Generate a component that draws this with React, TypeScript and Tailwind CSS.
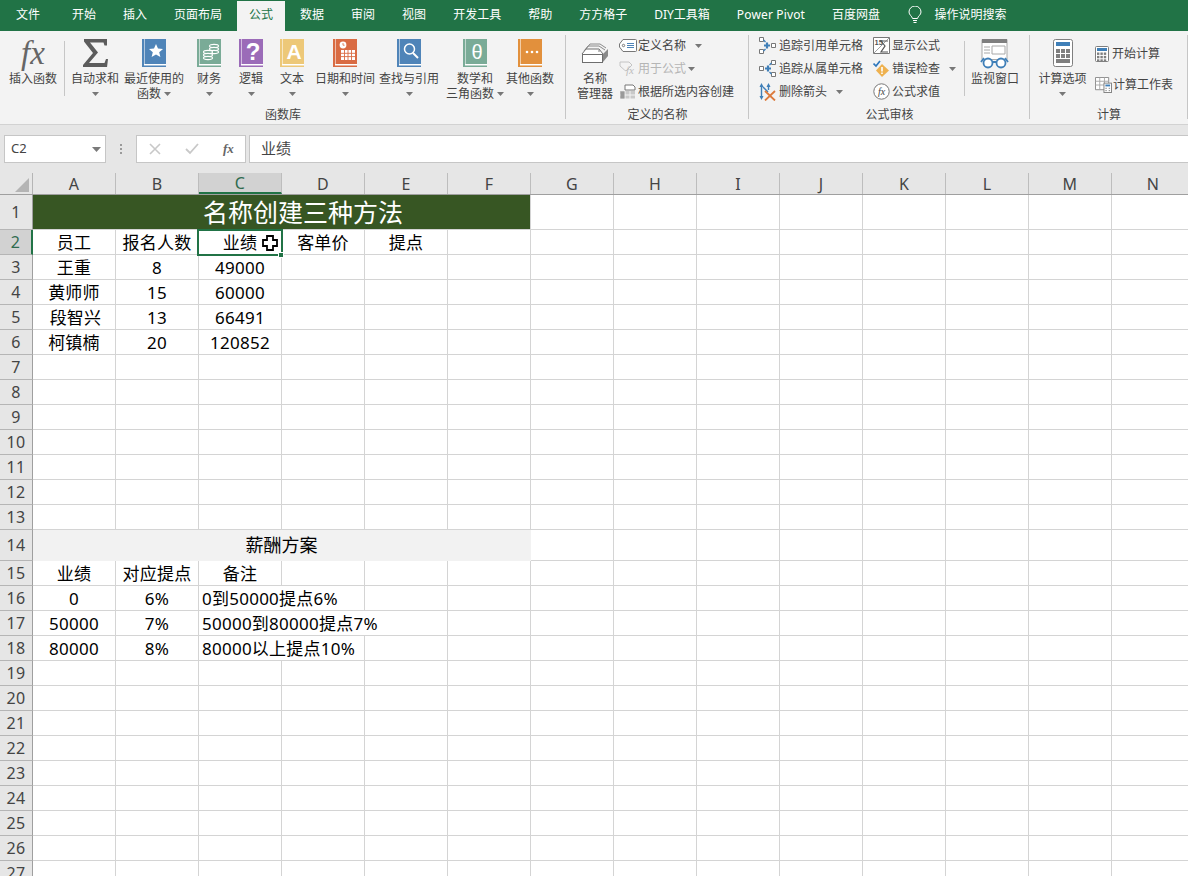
import React from 'react';

const tabs = ['开始', '插入', '页面布局', '公式', '数据', '审阅', '视图', '开发工具', '帮助', '方方格子', 'DIY工具箱', 'Power Pivot', '百度网盘'];
const cols = ['A', 'B', 'C', 'D', 'E', 'F', 'G', 'H', 'I', 'J', 'K', 'L', 'M', 'N'];

type Cell = { text?: string; span?: string; cls?: string; left?: boolean };
type Row = { n: number; h: string; cells: Cell[] };

const plain = (n: number): Row => ({ n, h: 'h-[25px]', cells: [] });
const row = (n: number, ...texts: string[]): Row => ({ n, h: 'h-[25px]', cells: texts.map((text) => ({ text })) });

const rows: Row[] = [
    { n: 1, h: 'h-[35px]', cells: [{ text: '名称创建三种方法', span: 'col-span-6', cls: 'bg-[#375623] text-white text-[25px] tracking-normal pl-[43px] border-[#375623]' }] },
    row(2, '员工', '报名人数', '业绩', '客单价', '提点'),
    row(3, '王重', '8', '49000'),
    row(4, '黄师师', '15', '60000'),
    { n: 5, h: 'h-[25px]', cells: [{ text: '段智兴', cls: 'pl-[3px]' }, { text: '13' }, { text: '66491' }] },
    row(6, '柯镇楠', '20', '120852'),
    plain(7), plain(8), plain(9), plain(10), plain(11), plain(12), plain(13),
    { n: 14, h: 'h-[31px]', cells: [{ text: '薪酬方案', span: 'col-span-6', cls: 'bg-[#f2f2f2] text-[18px] tracking-normal border-[#f2f2f2]' }] },
    row(15, '业绩', '对应提点', '备注'),
    { n: 16, h: 'h-[25px]', cells: [{ text: '0' }, { text: '6%' }, { text: '0到50000提点6%', span: 'col-span-2', left: true }] },
    { n: 17, h: 'h-[25px]', cells: [{ text: '50000' }, { text: '7%' }, { text: '50000到80000提点7%', span: 'col-span-3', left: true }] },
    { n: 18, h: 'h-[25px]', cells: [{ text: '80000' }, { text: '8%' }, { text: '80000以上提点10%', span: 'col-span-2', left: true }] },
    plain(19), plain(20), plain(21), plain(22), plain(23), plain(24), plain(25), plain(26), plain(27),
];

const Caret = () => (
    <svg width="7" height="4" viewBox="0 0 7 4" className="inline-block shrink-0">
        <path d="M0 0h7L3.5 4z" fill="#777" />
    </svg>
);

const Book = ({ color, children }: { color: string; children?: React.ReactNode }) => (
    <svg width="24" height="28" viewBox="0 0 24 28">
        <rect x="0" y="0" width="24" height="25" fill={color} />
        <rect x="2" y="25" width="22" height="1.500" fill="#fff" />
        <rect x="0" y="26.500" width="24" height="1.500" fill={color} />
        <rect x="0" y="0" width="2" height="28" fill={color} />
        <rect x="2" y="0" width="1" height="25" fill="#fff" opacity="0.55" />
        {children}
    </svg>
);

const bookIcons: Record<string, React.ReactNode> = {
    recent: <Book color="#4f84b8"><path d="M14 5l2 4.6 5 .4-3.8 3.2 1.2 4.8-4.4-2.6-4.4 2.6 1.2-4.8L7 10l5-.4z" fill="#fff" /></Book>,
    finance: (
        <Book color="#7aab97">
            <g fill="#7aab97" stroke="#fff" strokeWidth="1.1">
                <ellipse cx="17" cy="7" rx="4.5" ry="1.6" />
                <ellipse cx="17" cy="10" rx="4.5" ry="1.6" />
                <ellipse cx="17" cy="13" rx="4.5" ry="1.6" />
                <ellipse cx="11" cy="13" rx="4.5" ry="1.6" />
                <ellipse cx="11" cy="16" rx="4.5" ry="1.6" />
                <ellipse cx="11" cy="19" rx="4.5" ry="1.6" />
            </g>
        </Book>
    ),
    logic: <Book color="#9b6bb8"><text x="14" y="20.500" textAnchor="middle" fontSize="24" fontWeight="700" fill="#fff" fontFamily="Liberation Sans">?</text></Book>,
    text: <Book color="#edc878"><text x="14" y="19.500" textAnchor="middle" fontSize="21" fontWeight="700" fill="#fff" fontFamily="Liberation Sans">A</text></Book>,
    date: (
        <Book color="#d96b43">
            <circle cx="10" cy="6" r="3.4" fill="#fff" />
            <path d="M10 4v2.2h1.6" stroke="#d96b43" strokeWidth="0.8" fill="none" />
            <path d="M8 11h14v10H8z" fill="#fff" />
            <path d="M8 14.3h14M8 17.6h14M11.5 11v10M15 11v10M18.5 11v10" stroke="#d96b43" strokeWidth="0.9" />
        </Book>
    ),
    lookup: (
        <Book color="#4f84b8">
            <circle cx="12.500" cy="10" r="5" fill="none" stroke="#fff" strokeWidth="1.500" />
            <path d="M16 14l5 5" stroke="#fff" strokeWidth="2" />
        </Book>
    ),
    math: <Book color="#7aab97"><text x="14" y="19.500" textAnchor="middle" fontSize="20" fill="#fff" fontFamily="Liberation Sans">θ</text></Book>,
    other: <Book color="#e2903c"><circle cx="9" cy="13" r="1.3" fill="#fff" /><circle cx="14" cy="13" r="1.3" fill="#fff" /><circle cx="19" cy="13" r="1.3" fill="#fff" /></Book>,
};

const Sigma = () => (
    <svg width="25" height="28" viewBox="0 0 25 28">
        <path d="M1 0h23v6.500h-2.500l-1-3H7l8 10-9 10.500h15.500l1.500-4H25l-1 8.500H0v-2.500L10 14 1 2.500z" fill="#5c5c5c" />
    </svg>
);

const NameManagerIcon = () => (
    <svg width="28" height="23" viewBox="0 0 28 23" fill="none">
        <path d="M5 7l4-5h10l6 4M3 9l4-5h11l6 4" stroke="#8a8a8a" strokeWidth="1" />
        <path d="M1 12l4-5h13l4 5" fill="#fff" stroke="#6e6e6e" strokeWidth="1" />
        <path d="M22 12l5-5v7l-5 6z" fill="#8a8a8a" />
        <rect x="1.500" y="12.500" width="20" height="8" fill="#fff" stroke="#6e6e6e" />
        <circle cx="18" cy="9" r="0.8" fill="#6e6e6e" />
    </svg>
);

const TagIcon = () => (
    <svg width="18" height="13" viewBox="0 0 18 13" fill="none">
        <path d="M4 .5h12.500a1 1 0 0 1 1 1v10a1 1 0 0 1-1 1H4L.5 8V5z" fill="#fff" stroke="#777" />
        <circle cx="4.500" cy="6.500" r="1.200" stroke="#777" />
        <path d="M8 4.500h7M8 6.500h7M8 8.500h7" stroke="#4f84b8" />
    </svg>
);

const UseFormulaIcon = () => (
    <svg width="18" height="18" viewBox="0 0 18 18" fill="none">
        <path d="M1 2h9l3 3-6 6-1.500-1L1 6z" stroke="#c4c4c4" />
        <text x="7" y="14" fontSize="11" fontStyle="italic" fontFamily="Liberation Serif" fill="#bdbdbd">fx</text>
    </svg>
);

const FromSelectionIcon = () => (
    <svg width="17" height="15" viewBox="0 0 17 15" fill="none">
        <path d="M1 7h15v7.500H1z" fill="#c9c9c9" />
        <path d="M1 11h15M6 7v8M11 7v8" stroke="#f3f3f3" />
        <path d="M6 1h8l2 2v3H6z" fill="#fff" stroke="#777" />
        <path d="M1.500 7.500h4v7h-4z" fill="#9a9a9a" />
    </svg>
);

const TraceIcon = ({ flip }: { flip?: boolean }) => (
    <svg width="17" height="17" viewBox="0 0 17 17" fill="none" className={flip ? '-scale-x-100' : ''}>
        <path d="M.5.500h4v4h-4zM.5 12.500h4v4h-4zM12.500 6.500h4v4h-4z" stroke="#777" fill="#fff" />
        <path d="M5 8.500h6M8 5.500v6" stroke="#3f7fb8" strokeWidth="2.200" />
        <path d="M4.500 3l2 2M4.500 14l2-2" stroke="#3f7fb8" strokeWidth="1.400" />
    </svg>
);

const RemoveArrowsIcon = () => (
    <svg width="17" height="18" viewBox="0 0 17 18" fill="none">
        <path d="M2.500 2v13M9.500 2v5" stroke="#3f7fb8" strokeWidth="1.400" />
        <path d="M.5 13l2 4 2-4zM.5 4l2-4 2 4zM7.500 4l2-4 2 4z" fill="#3f7fb8" />
        <path d="M4 4l5 5" stroke="#3f7fb8" strokeWidth="1.400" />
        <path d="M6 8l10 9.500M16 8L6 17.500" stroke="#dc7a3c" strokeWidth="1.800" />
    </svg>
);

const ShowFormulaIcon = () => (
    <svg width="17" height="17" viewBox="0 0 17 17" fill="none">
        <path d="M.5.500h16v16H.5z" stroke="#777" fill="#fff" />
        <text x="1.500" y="8" fontSize="7.500" fontWeight="700" fontFamily="Liberation Sans" fill="#555">15</text>
        <path d="M7 4h8M8 4l4 5-4 6h7" stroke="#555" strokeWidth="1.200" />
        <path d="M1 16L16 1" stroke="#777" strokeWidth="0.700" />
    </svg>
);

const ErrorCheckIcon = () => (
    <svg width="17" height="17" viewBox="0 0 17 17" fill="none">
        <path d="M9 4l7 6.500-7 6.500-6-6.500z" fill="#eeb14f" />
        <path d="M9 7v4.500M9 12.500v1.500" stroke="#fff" strokeWidth="1.600" />
        <path d="M.5 3.500L3 6l4-5" stroke="#2f78bd" strokeWidth="1.700" />
    </svg>
);

const EvaluateIcon = () => (
    <svg width="17" height="17" viewBox="0 0 17 17" fill="none">
        <circle cx="8.500" cy="8.500" r="7.700" fill="#fff" stroke="#777" />
        <text x="8.500" y="12" textAnchor="middle" fontSize="10" fontStyle="italic" fontFamily="Liberation Serif" fill="#444">fx</text>
    </svg>
);

const WatchIcon = () => (
    <svg width="30" height="30" viewBox="0 0 30 30" fill="none">
        <path d="M2 .500h25v20H2z" fill="#fff" stroke="#a8a8a8" />
        <path d="M2 0h25v4H2z" fill="#7f7f7f" />
        <path d="M4 8h6M4 11h6M4 14h6" stroke="#a8a8a8" />
        <path d="M12 7h13v8H12z" stroke="#a8a8a8" />
        <circle cx="8" cy="24" r="4.500" fill="#fff" stroke="#3f7fb8" strokeWidth="1.800" />
        <circle cx="21" cy="24" r="4.500" fill="#fff" stroke="#3f7fb8" strokeWidth="1.800" />
        <path d="M12 23h5M1 23l3-4M28 23l-3-4" stroke="#3f7fb8" strokeWidth="1.800" />
    </svg>
);

const CalcKeys = ({ x, y, cell, gap, n }: { x: number; y: number; cell: number; gap: number; n: number }) => (
    <g fill="#7f7f7f">
        {Array.from({ length: n * n }).map((_, i) => (
            <rect key={i} x={x + (i % n) * (cell + gap)} y={y + Math.floor(i / n) * (cell + gap)} width={cell} height={cell} />
        ))}
    </g>
);

const CalcIcon = () => (
    <svg width="20" height="28" viewBox="0 0 20 28" fill="none">
        <rect x="0.500" y="0.500" width="19" height="27" rx="2" fill="#fff" stroke="#7f7f7f" />
        <rect x="3" y="3" width="14" height="4" fill="#3f7fb8" />
        <CalcKeys x={3} y={10} cell={4} gap={1} n={3} />
        <rect x="3" y="20" width="14" height="4" fill="#7f7f7f" />
    </svg>
);

const SmallCalcIcon = () => (
    <svg width="14" height="16" viewBox="0 0 14 16" fill="none">
        <rect x="0.500" y="0.500" width="13" height="15" rx="1" fill="#fff" stroke="#7f7f7f" />
        <rect x="2" y="2" width="10" height="3" fill="#3f7fb8" />
        <CalcKeys x={2} y={6.5} cell={2.4} gap={1} n={3} />
    </svg>
);

const CalcSheetIcon = () => (
    <svg width="17" height="16" viewBox="0 0 18 17" fill="none">
        <path d="M.5.500h14v13H.5z" fill="#fff" stroke="#8a8a8a" />
        <path d="M.5 4.500h14M.5 8.500h14M5 .5v13M10 .5v13" stroke="#a8a8a8" />
        <rect x="9.500" y="6.500" width="8" height="10" fill="#fff" stroke="#7f7f7f" />
        <rect x="11" y="8" width="5" height="2" fill="#3f7fb8" />
        <path d="M11 12h1.500M14.500 12H16M11 14.500h1.500M14.500 14.500H16" stroke="#7f7f7f" />
    </svg>
);

const BigButton = ({ width, icon, lines, caret }: { width: string; icon: React.ReactNode; lines: string[]; caret?: 'inline' | 'below' }) => (
    <div className={`${width} shrink-0 flex flex-col items-center pt-[8px]`}>
        <div className="h-[32px] flex items-start justify-center">{icon}</div>
        {lines.map((line, i) => (
            <div key={line} className="h-[15px] leading-[15px] whitespace-nowrap flex items-center gap-[3px]">
                {line}
                {caret === 'inline' && i === lines.length - 1 && <Caret />}
            </div>
        ))}
        {caret === 'below' && <div className="h-[15px] flex items-center"><Caret /></div>}
    </div>
);

const SmallRow = ({ icon, text, h, iconW, caretGap, disabled }: { icon: React.ReactNode; text: string; h: string; iconW: string; caretGap?: string; disabled?: boolean }) => (
    <div className={`${h} flex items-center whitespace-nowrap ${disabled ? 'text-[#b5b5b5]' : ''}`}>
        <div className={`${iconW} shrink-0 flex items-center`}>{icon}</div>
        {text}
        {caretGap && <div className={`${caretGap} flex`}><Caret /></div>}
    </div>
);

const Group = ({ width, label, children }: { width: string; label: string; children: React.ReactNode }) => (
    <div className={`${width} shrink-0 h-full flex flex-col relative`}>
        <div className="flex h-[74px]">{children}</div>
        <div className="text-center leading-[15px] pt-[2px]">{label}</div>
        <div className="absolute right-0 top-[4px] h-[84px] w-px bg-[#c6c6c6]" />
    </div>
);

const InnerSep = () => <div className="w-px h-[55px] mt-[10px] bg-[#c6c6c6] shrink-0" />;

const Ribbon = () => (
    <div className="h-[94px] bg-[#f3f3f3] border-b border-[#d2d2d2] flex text-[12px] text-[#444]">
        <Group width="w-[566px]" label="函数库">
            <div className="w-[64px] shrink-0 flex flex-col items-center pt-[4px] pl-[2px]">
                <div className="h-[36px] leading-[36px] text-[33px] italic text-[#666] [font-family:'Liberation_Serif',serif]">fx</div>
                <div className="h-[15px] leading-[15px] whitespace-nowrap">插入函数</div>
            </div>
            <InnerSep />
            <BigButton width="w-[60px]" icon={<Sigma />} lines={['自动求和']} caret="below" />
            <BigButton width="w-[58px]" icon={bookIcons.recent} lines={['最近使用的', '函数']} caret="inline" />
            <BigButton width="w-[52px]" icon={bookIcons.finance} lines={['财务']} caret="below" />
            <BigButton width="w-[32px]" icon={bookIcons.logic} lines={['逻辑']} caret="below" />
            <BigButton width="w-[50px]" icon={bookIcons.text} lines={['文本']} caret="below" />
            <BigButton width="w-[56px]" icon={bookIcons.date} lines={['日期和时间']} caret="below" />
            <BigButton width="w-[72px]" icon={bookIcons.lookup} lines={['查找与引用']} caret="below" />
            <BigButton width="w-[60px]" icon={bookIcons.math} lines={['数学和', '三角函数']} caret="inline" />
            <BigButton width="w-[50px]" icon={bookIcons.other} lines={['其他函数']} caret="below" />
        </Group>
        <Group width="w-[183px]" label="定义的名称">
            <div className="w-[53px] pl-[5px] shrink-0 flex flex-col items-center pt-[11px]">
                <div className="h-[29px]"><NameManagerIcon /></div>
                <div className="h-[15px] leading-[15px]">名称</div>
                <div className="h-[15px] leading-[15px] whitespace-nowrap">管理器</div>
            </div>
            <div className="pt-[3px]">
                <SmallRow h="h-[23px]" iconW="w-[19px]" icon={<TagIcon />} text="定义名称" caretGap="ml-[9px]" />
                <SmallRow h="h-[23px]" iconW="w-[19px]" icon={<UseFormulaIcon />} text="用于公式" caretGap="ml-[2px]" disabled />
                <SmallRow h="h-[23px]" iconW="w-[19px]" icon={<FromSelectionIcon />} text="根据所选内容创建" />
            </div>
        </Group>
        <Group width="w-[281px]" label="公式审核">
            <div className="w-[124px] pl-[10px] shrink-0 pt-[3px]">
                <SmallRow h="h-[23px]" iconW="w-[20px]" icon={<TraceIcon />} text="追踪引用单元格" />
                <SmallRow h="h-[23px]" iconW="w-[20px]" icon={<TraceIcon flip />} text="追踪从属单元格" />
                <SmallRow h="h-[23px]" iconW="w-[20px]" icon={<RemoveArrowsIcon />} text="删除箭头" caretGap="ml-[9px]" />
            </div>
            <div className="w-[91px] shrink-0 pt-[3px]">
                <SmallRow h="h-[23px]" iconW="w-[19px]" icon={<ShowFormulaIcon />} text="显示公式" />
                <SmallRow h="h-[23px]" iconW="w-[19px]" icon={<ErrorCheckIcon />} text="错误检查" caretGap="ml-[9px]" />
                <SmallRow h="h-[23px]" iconW="w-[19px]" icon={<EvaluateIcon />} text="公式求值" />
            </div>
            <InnerSep />
            <BigButton width="w-[60px]" icon={<WatchIcon />} lines={['监视窗口']} />
        </Group>
        <Group width="w-[158px]" label="计算">
            <BigButton width="w-[65px]" icon={<CalcIcon />} lines={['计算选项']} caret="below" />
            <div className="pt-[7px]">
                <SmallRow h="h-[31px]" iconW="w-[17px]" icon={<SmallCalcIcon />} text="开始计算" />
                <SmallRow h="h-[31px]" iconW="w-[18px]" icon={<CalcSheetIcon />} text="计算工作表" />
            </div>
        </Group>
    </div>
);

const FormulaBar = () => (
    <div className="h-[48px] bg-[#e6e6e6] flex items-start pt-[10px] pl-[4px] text-[#444]">
        <div className="w-[102px] h-[28px] bg-white border border-[#c6c6c6] flex items-center justify-between pl-[6px] pr-[4px] text-[13px]">
            C2
            <svg width="9" height="5" viewBox="0 0 9 5"><path d="M0 0h9L4.500 5z" fill="#7a7a7a" /></svg>
        </div>
        <div className="w-[30px] h-[28px] flex flex-col items-center justify-center gap-[2px]">
            <div className="w-[2px] h-[2px] bg-[#9a9a9a]" />
            <div className="w-[2px] h-[2px] bg-[#9a9a9a]" />
            <div className="w-[2px] h-[2px] bg-[#9a9a9a]" />
        </div>
        <div className="w-[110px] h-[28px] bg-white border border-[#c6c6c6] flex items-center pl-[12px] gap-[24px]">
            <svg width="12" height="12" viewBox="0 0 12 12"><path d="M1 1l10 10M11 1L1 11" stroke="#c8c8c8" strokeWidth="1.600" /></svg>
            <svg width="14" height="12" viewBox="0 0 14 12"><path d="M1 6l4 4 8-9" stroke="#c8c8c8" strokeWidth="1.800" fill="none" /></svg>
            <span className="text-[13px] italic font-bold text-[#666] [font-family:'Liberation_Serif',serif]">fx</span>
        </div>
        <div className="ml-[3px] flex-1 h-[28px] bg-white border border-[#c6c6c6] border-r-0 pl-[11px] flex items-center text-[15px] pb-[2px]">业绩</div>
    </div>
);

const Sheet = () => (
    <div className="relative text-[17px] tracking-[0.25px] text-black">
        <div className="grid grid-cols-[33px_repeat(14,83px)] h-[22px] bg-[#e6e6e6] border-b border-[#9f9f9f]">
            <div className="border-r border-[#b5b5b5] relative">
                <svg width="14" height="14" viewBox="0 0 14 14" className="absolute right-[3px] bottom-[2px]"><path d="M14 0v14H0z" fill="#b4b4b4" /></svg>
            </div>
            {cols.map((c) => (
                <div key={c} className={`border-r border-[#bdbdbd] flex items-center justify-center text-[16px] leading-none ${c === 'C' ? 'bg-[#d2d2d2] border-b-2 border-b-[#217346] text-[#2f6b4f]' : 'text-[#444]'}`}>{c}</div>
            ))}
        </div>
        {rows.map((r) => {
            const used = r.cells.reduce((sum, c) => sum + (c.span === 'col-span-6' ? 6 : c.span === 'col-span-3' ? 3 : c.span === 'col-span-2' ? 2 : 1), 0);
            return (
                <div key={r.n} className={`grid grid-cols-[33px_repeat(14,83px)] ${r.h}`}>
                    <div className={`border-b border-[#b5b5b5] flex items-center justify-center text-[16px] leading-none ${r.n === 2 ? 'bg-[#d2d2d2] border-r-2 border-r-[#217346] text-[#2f6b4f]' : 'bg-[#e6e6e6] border-r border-r-[#9f9f9f] text-[#444]'}`}>{r.n}</div>
                    {r.cells.map((c, i) => (
                        <div key={i} className={`border-r border-b border-[#d4d4d4] flex items-center leading-none whitespace-nowrap ${c.left ? 'pl-[3px]' : 'justify-center'} ${c.span ?? ''} ${c.cls ?? ''}`}>{c.text}</div>
                    ))}
                    {Array.from({ length: 14 - used }).map((_, i) => (
                        <div key={i} className="border-r border-b border-[#d4d4d4]" />
                    ))}
                </div>
            );
        })}
        {/* selected cell C2 */}
        <div className="absolute left-[197px] top-[56px] w-[86px] h-[27px] border-2 border-[#217346]" />
        <div className="absolute left-[278px] top-[79px] w-[6px] h-[6px] bg-[#217346] border border-white" />
        <svg width="16" height="16" viewBox="0 0 16 16" className="absolute left-[262px] top-[62px]">
            <path d="M5 1h6v4h4v6h-4v4H5v-4H1V5h4z" fill="#fff" stroke="#000" strokeWidth="1.800" />
        </svg>
    </div>
);

export default function App() {
    return (
        <div className="w-[1188px] h-[876px] overflow-hidden bg-white [font-family:'Noto_Sans','Noto_Sans_CJK_SC',sans-serif]">
            <div className="h-[31px] bg-[#217346] flex items-end text-[12px] text-white pt-px">
                <div className="h-[30px] leading-[27px] pl-[16px] pr-[18.5px]">文件</div>
                {tabs.map((t) =>
                    t === '公式' ? (
                        <div key={t} className="h-[30px] leading-[27px] mx-[1.5px] px-[12px] bg-[#f3f3f3] text-[#217346]">{t}</div>
                    ) : (
                        <div key={t} className={`h-[30px] leading-[27px] px-[13.5px] whitespace-nowrap ${t === 'Power Pivot' ? 'tracking-[0.15px]' : ''}`}>{t}</div>
                    ),
                )}
                <div className="h-[30px] flex items-center pl-[14px] pb-[2px]">
                    <svg width="14" height="18" viewBox="0 0 14 18" fill="none" stroke="#fff" strokeWidth="1">
                        <path d="M4.500 12.500C4 10 1 9 1 6a6 6 0 0 1 12 0c0 3-3 4-3.500 6.500z" />
                        <path d="M5 14.500h4M5.500 16.500h3" />
                    </svg>
                </div>
                <div className="h-[30px] leading-[27px] pl-[13px]">操作说明搜索</div>
            </div>
            <Ribbon />
            <FormulaBar />
            <Sheet />
        </div>
    );
}
